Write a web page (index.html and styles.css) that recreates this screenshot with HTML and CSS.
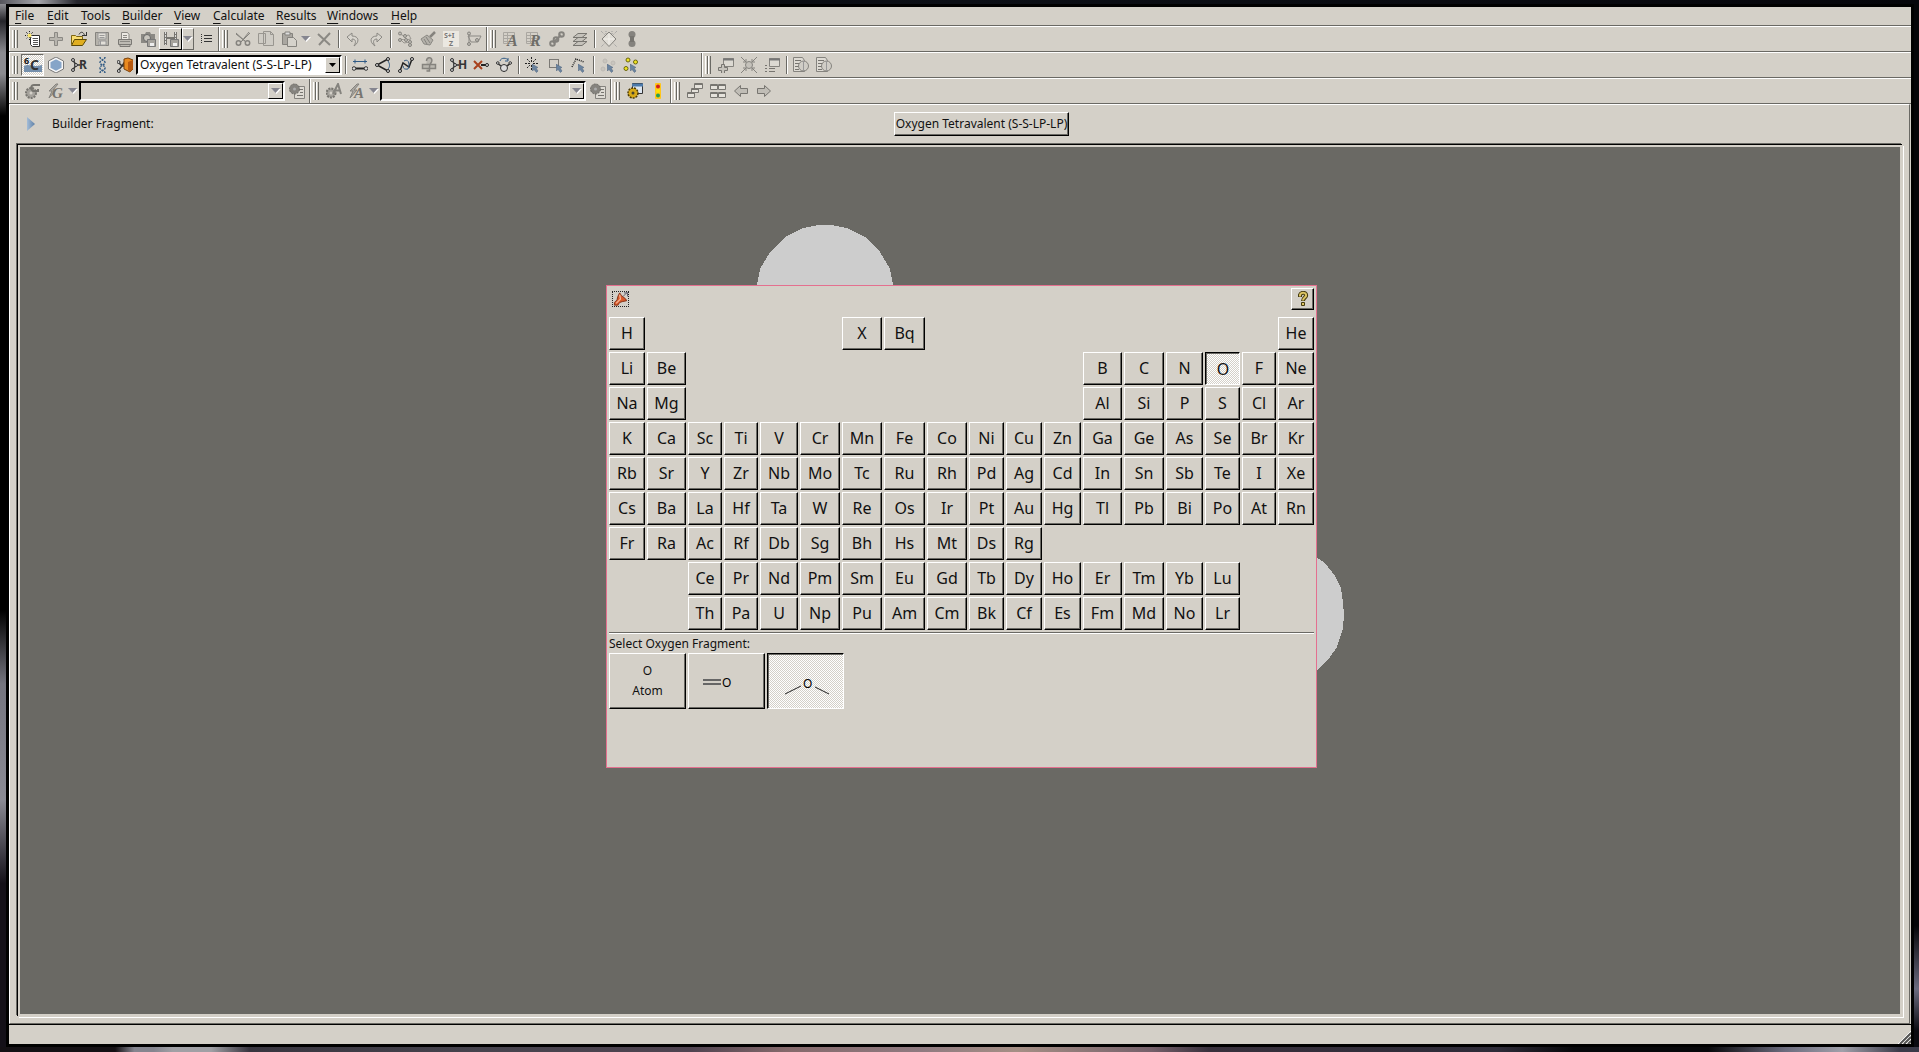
FILE: index.html
```
<!DOCTYPE html>
<html lang="en">
<head>
<meta charset="utf-8">
<title>Builder</title>
<link rel="stylesheet" href="styles.css">
</head>
<body>
<svg class="sprite" aria-hidden="true">
  <symbol id="i-new" viewBox="0 0 16 16"><path d="M5.500 4.500h9v11h-7l-2-2z" fill="#fff" stroke="#333"/><path d="M8 7.500h5M8 9.500h5M8 11.500h5M8 13.500h5" stroke="#555"/><path d="M1 1l7 7M8 1L1 8M4.500 0v9M0 4.500h9" stroke="#222" stroke-dasharray="1 1"/><circle cx="4.500" cy="4.500" r="2" fill="#fbe870"/></symbol>
  <symbol id="i-plus" viewBox="0 0 16 16"><path d="M6.500 1.500h3v5h5v3h-5v5h-3v-5h-5v-3h5z" fill="#b8b5ae" stroke="#8b8984"/></symbol>
  <symbol id="i-open" viewBox="0 0 16 16"><path d="M.500 13.500v-9h4l1 1h6v3" fill="#f8dc70" stroke="#7c6410"/><path d="M.500 14.500l3-6h12l-4 6z" fill="#e0ae20" stroke="#5c4a08"/><path d="M8 3.500c2-4 5-2 5.500 1M11 4.500h4M15.500 1v4" fill="none" stroke="#333"/></symbol>
  <symbol id="i-save" viewBox="0 0 16 16"><path d="M1.500 1.500h13v13h-13z" fill="#b5b2ab" stroke="#85837e"/><path d="M4 2h8v6H4zM5 10h7v4H5z" fill="#e2dfd8" stroke="#999"/><path d="M5.500 4.500h5M5.500 6.500h5M6.500 10v4" stroke="#999"/></symbol>
  <symbol id="i-print" viewBox="0 0 16 16"><path d="M4.500 8V1.500h6l1.500 2V8" fill="#ece9e3" stroke="#8b8984"/><path d="M1.500 8.500h13v5h-13zM3 13.500h10v2H3z" fill="#bdbab3" stroke="#7b7975"/><path d="M6 4.500h4M6 6.500h4M3 10.500h10" stroke="#8b8984"/></symbol>
  <symbol id="i-camera" viewBox="0 0 16 16"><path d="M1 3h4l1-2h4l1 2h4v9H1z" fill="#8b8984"/><circle cx="7" cy="7" r="3.500" fill="#c8c5be" stroke="#666"/><path d="M7.500 8.500h8v7h-8z" fill="#a5a29c" stroke="#777"/><path d="M10 12h4v3h-4z" fill="#eee"/></symbol>
  <symbol id="i-movie" viewBox="0 0 16 16"><path d="M1 1h3v13H1zM11 1h3v9h-3zM4 6h7v2H4z" fill="#777570"/><path d="M2.500 1v13M12.500 1v9" stroke="#ddd" stroke-dasharray="2 1"/><path d="M7.500 8.500h8v7h-8z" fill="#a5a29c" stroke="#777"/><path d="M10 12h4v3h-4z" fill="#eee"/></symbol>
  <symbol id="i-list" viewBox="0 0 16 16"><path d="M6 4.500h8M6 7.500h8M6 10.500h8" stroke="#333"/><path d="M3 3.500h2M3 5.500h2M3 7.500h2M3 9.500h2M3 11.500h2" stroke="#333" stroke-dasharray="1 1"/></symbol>
  <symbol id="i-cut" viewBox="0 0 16 16"><path d="M1 2l10 9M1 3l10 8M14 1L6 11M15 2L5 12" stroke="#85837e"/><circle cx="3.500" cy="12" r="2.200" fill="none" stroke="#85837e" stroke-width="1.500"/><circle cx="12.500" cy="12" r="2.200" fill="none" stroke="#85837e" stroke-width="1.500"/></symbol>
  <symbol id="i-copy" viewBox="0 0 16 16"><path d="M.500 2.500h7v10h-7zM5.500.500h7l3 3v11h-10z" fill="#cfccc5" stroke="#999690"/><path d="M12.500.500v3h3" fill="none" stroke="#999690"/></symbol>
  <symbol id="i-paste" viewBox="0 0 16 16"><path d="M1.500 2.500h10v11h-10z" fill="#aaa7a1" stroke="#85837e"/><path d="M4 1h5v3H4z" fill="#ddd" stroke="#85837e"/><path d="M6.500 6.500h6l3 3v6h-9z" fill="#d5d2cb" stroke="#85837e"/></symbol>
  <symbol id="i-x" viewBox="0 0 16 16"><path d="M2 3l12 11M14 2L3 14" stroke="#8b8984" stroke-width="2"/></symbol>
  <symbol id="i-undo" viewBox="0 0 16 16"><path d="M2 6l5-4v3c7 0 8 6 2 10 3-5 1-7-2-7v3z" fill="#d8d5ce" stroke="#8b8984"/></symbol>
  <symbol id="i-redo" viewBox="0 0 16 16"><path d="M14 6L9 2v3c-7 0-8 6-2 10-3-5-1-7 2-7v3z" fill="#d8d5ce" stroke="#8b8984"/></symbol>
  <symbol id="i-nodes" viewBox="0 0 16 16"><path d="M3 3l4 2 5-1 2 4-6 1-5-1 4 4 6-1 1 3" fill="none" stroke="#999690"/><g fill="#c0bdb6" stroke="#85837e"><circle cx="3" cy="2.500" r="1.500"/><circle cx="8" cy="5" r="1.500"/><circle cx="3" cy="9" r="1.500"/><circle cx="9" cy="9" r="1.500"/><circle cx="13" cy="11" r="1.500"/><circle cx="13" cy="14" r="1.500"/></g></symbol>
  <symbol id="i-brush" viewBox="0 0 16 16"><path d="M15 1l-5 5" stroke="#85837e" stroke-width="2.500"/><path d="M7 4l6 5-3 5-6-1-3-5z" fill="#b5b2ab" stroke="#8b8984"/><path d="M4 8l3 5M6 6l4 6" stroke="#85837e"/></symbol>
  <symbol id="i-build" viewBox="0 0 16 16"><path d="M2 5h13l-3 6H5zM3 2v12" fill="none" stroke="#8b8984"/><g fill="#c0bdb6" stroke="#85837e"><circle cx="3" cy="2.500" r="1.500"/><circle cx="3" cy="13" r="1.500"/><circle cx="11" cy="9" r="1.500"/></g></symbol>
  <symbol id="i-sheet" viewBox="0 0 16 16"><path d="M.500 1.500h11v11H.500zM1 4.500h10M1 7.500h10M1 10.500h10M4.500 2v10" fill="none" stroke="#aaa7a1"/></symbol>
  <symbol id="i-link" viewBox="0 0 16 16"><g fill="none" stroke="#85837e" stroke-width="2"><circle cx="3.500" cy="12.500" r="2.300"/><circle cx="7" cy="8.500" r="2.300"/><circle cx="12.500" cy="3.500" r="2.300"/><path d="M4 12l8-8"/></g></symbol>
  <symbol id="i-layers" viewBox="0 0 16 16"><g fill="#c5c2bb" stroke="#777570"><path d="M1 14.500l5-4h9l-5 4z"/><path d="M1 10.500l5-4h9l-5 4z"/><path d="M1 6.500l5-4h9l-5 4z"/></g></symbol>
  <symbol id="i-diamond" viewBox="0 0 16 16"><path d="M0 0l16 16M16 0L0 16M5 0v3M11 0v3" stroke="#999" stroke-dasharray="1 1"/><path d="M8 1l7 7-7 7.500L1 8z" fill="#e0ddd6" stroke="#85837e"/><path d="M8 3v10M3 8h10" stroke="#f3f1ec"/></symbol>
  <symbol id="i-orbital" viewBox="0 0 16 16"><circle cx="8" cy="3.500" r="3.500" fill="#85837e"/><circle cx="8" cy="12.500" r="3.500" fill="#85837e"/><path d="M6 5h4v6H6z" fill="#777570"/></symbol>
  <symbol id="i-ring" viewBox="0 0 16 16"><path d="M8 1l6.500 3.500v7L8 15l-6.500-3.500v-7z" fill="#86a5c8" stroke="#f6f6f6" stroke-width="2"/><path d="M8 0l7.500 4v8L8 16 .500 12V4z" fill="none" stroke="#777"/></symbol>
  <symbol id="i-valence" viewBox="0 0 16 16"><path d="M2 3l3 5-3 5M5 8h4" fill="none" stroke="#333" stroke-width="1.500"/><g fill="#ccc" stroke="#333"><circle cx="2" cy="3" r="1.500"/><circle cx="2" cy="13" r="1.500"/><circle cx="5" cy="8" r="1.500"/></g></symbol>
  <symbol id="i-dna" viewBox="0 0 16 16"><path d="M6 0c0 3 5 3 5 5.500S6 8 6 11s5 2 5 5M11 0c0 3-5 3-5 5.500S11 8 11 11s-5 2-5 5" fill="none" stroke="#315b85" stroke-width="1.500" stroke-dasharray="2 1"/></symbol>
  <symbol id="i-frag" viewBox="0 0 16 16"><path d="M1 5l4 4-4 5M5 9l4-6M5 9h5" fill="none" stroke="#333" stroke-width="1.500"/><path d="M7 2l4-1 5 2v9l-3 3-6-3z" fill="#e98a20" stroke="#794008"/><path d="M11 5l5-2v9l-3 3-2-2z" fill="#b85a10"/><circle cx="1.500" cy="5" r="1.500" fill="#ccc" stroke="#333"/><circle cx="1.800" cy="14" r="1.500" fill="#ccc" stroke="#333"/></symbol>
  <symbol id="i-bond" viewBox="0 0 16 16"><path d="M1 4.500h14M3 2.500v4M13 2.500v4" stroke="#315b85"/><path d="M2 11.500h12" stroke="#222" stroke-width="2"/><circle cx="2" cy="11.500" r="1.800" fill="#ddd" stroke="#333"/><circle cx="14" cy="11.500" r="1.800" fill="#ddd" stroke="#333"/></symbol>
  <symbol id="i-angle" viewBox="0 0 16 16"><path d="M13 2L2 8l11 6" fill="none" stroke="#222" stroke-width="1.500"/><path d="M13 4c2 3 2 6 0 8" fill="none" stroke="#315b85"/><circle cx="2" cy="8" r="1.500" fill="#ddd" stroke="#222"/><circle cx="13" cy="2" r="1.500" fill="#ddd" stroke="#222"/><circle cx="13" cy="14" r="1.500" fill="#ddd" stroke="#222"/></symbol>
  <symbol id="i-torsion" viewBox="0 0 16 16"><path d="M2 14l3-8 6 4 3-8" fill="none" stroke="#222" stroke-width="1.500"/><path d="M6 4c5-3 6 4 4 8-4 1-6-2-4-3" fill="none" stroke="#315b85"/><circle cx="2" cy="14" r="1.500" fill="#ddd" stroke="#222"/><circle cx="14" cy="2" r="1.500" fill="#ddd" stroke="#222"/></symbol>
  <symbol id="i-query" viewBox="0 0 16 16"><path d="M1.500 7.500h13v4h-13zM5.500 4c0-5 7-4 5 1-1 2-2 2-2 5v4h-3" fill="#bbb8b1" stroke="#85837e" stroke-width="1.500"/></symbol>
  <symbol id="i-delatom" viewBox="0 0 16 16"><path d="M8 8h6" stroke="#222" stroke-width="2"/><path d="M1 4l8 8M9 4l-8 8" stroke="#a8401c" stroke-width="2"/><circle cx="14" cy="8" r="1.500" fill="#ddd" stroke="#222"/></symbol>
  <symbol id="i-invert" viewBox="0 0 16 16"><path d="M1 6l7 5 7-5M8 11v4" stroke="#333" fill="none" stroke-width="1.500"/><path d="M4 4c1-4 7-3 8-1M12 1v3H9" fill="none" stroke="#315b85"/><circle cx="8" cy="11" r="3.500" fill="#ddd" stroke="#333"/><circle cx="1.800" cy="6" r="1.300" fill="#ddd" stroke="#333"/><circle cx="14.200" cy="6" r="1.300" fill="#ddd" stroke="#333"/></symbol>
  <symbol id="i-ptr" viewBox="0 0 8 9"><path d="M0 0l6 3.500-2 .500 2 3-1.500 1.500-2.500-3L.500 7z" fill="#6b84a0" stroke="#4d637c" stroke-width=".500"/></symbol>
  <symbol id="i-pick" viewBox="0 0 16 16"><path d="M6.500 0v5M6.500 8v5M0 6.500h5M8 6.500h5M2 2l3 3M11 2l-3 3M2 11l3-3" stroke="#222" stroke-dasharray="2 1"/><use href="#i-ptr" x="7" y="7" width="8" height="9"/></symbol>
  <symbol id="i-box" viewBox="0 0 16 16"><path d="M1.500 2.500h9v8h-9z" fill="none" stroke="#222" stroke-dasharray="1 1"/><use href="#i-ptr" x="8" y="7" width="8" height="9"/></symbol>
  <symbol id="i-lasso" viewBox="0 0 16 16"><path d="M1 10l4-8 8 3" fill="none" stroke="#222" stroke-width="1.500" stroke-dasharray="1 1"/><use href="#i-ptr" x="7" y="7" width="8" height="9"/></symbol>
  <symbol id="i-faint" viewBox="0 0 16 16"><g fill="#c8c5be" stroke="#bdbab3"><circle cx="5" cy="4" r="2"/><circle cx="13" cy="6" r="2"/><circle cx="3" cy="12" r="2"/></g><use href="#i-ptr" x="7" y="7" width="8" height="9"/></symbol>
  <symbol id="i-yellow" viewBox="0 0 16 16"><g fill="#eee420" stroke="#6b6510"><circle cx="5" cy="3" r="2"/><circle cx="12.500" cy="5" r="2"/><circle cx="3" cy="11.500" r="2"/></g><use href="#i-ptr" x="7" y="7" width="8" height="9"/></symbol>
  <symbol id="i-addwin" viewBox="0 0 16 16"><path d="M5.500 1.500h10v8h-10z" fill="#dcd9d2" stroke="#85837e"/><path d="M5 2.500h11" stroke="#777" stroke-width="2"/><path d="M3.500 7.500h3v3h3v3h-3v3h-3v-3h-3v-3h3z" fill="#c5c2bb" stroke="#777570"/></symbol>
  <symbol id="i-center" viewBox="0 0 16 16"><path d="M0 0l5 5M16 0l-5 5M0 16l5-5M16 16l-5-5M2 5h3V2M14 5h-3V2M2 11h3v3M14 11h-3v3" fill="none" stroke="#85837e"/><circle cx="8" cy="8" r="3.500" fill="#c5c2bb" stroke="#85837e"/></symbol>
  <symbol id="i-listwin" viewBox="0 0 16 16"><path d="M5.500 1.500h10v8h-10z" fill="#dcd9d2" stroke="#85837e"/><path d="M5 2.500h11" stroke="#777" stroke-width="2"/><path d="M1 8.500h2M1 11.500h2M1 14.500h2M5 11.500h6M5 14.500h6" stroke="#777570"/></symbol>
  <symbol id="i-doc" viewBox="0 0 16 16"><path d="M.500.500h9l2 3v11H.500z" fill="#dedbd4" stroke="#85837e"/><path d="M2 3.500h6M2 6.500h5M2 9.500h5M2 12.500h4" stroke="#777570"/><circle cx="10.500" cy="9" r="5" fill="#d0cdc6" stroke="#85837e"/><path d="M10.500 4v10" stroke="#999"/></symbol>
  <symbol id="i-gearg" viewBox="0 0 16 16"><circle cx="6" cy="10" r="5" fill="#a5a29c" stroke="#777570" stroke-width="2" stroke-dasharray="2 1"/><circle cx="6" cy="10" r="1.500" fill="#d4d0c8"/><path d="M15 2H9c-3 0-4 4-1 6h5V6" fill="none" stroke="#777570" stroke-width="2"/></symbol>
  <symbol id="i-gear2" viewBox="0 0 16 16"><circle cx="5" cy="10" r="4.500" fill="#a5a29c" stroke="#777570" stroke-width="2" stroke-dasharray="2 1"/><circle cx="5" cy="10" r="1.500" fill="#d4d0c8"/><path d="M7 11l5-10 3 10M9 7.500h5" fill="none" stroke="#85837e" stroke-width="2"/></symbol>
  <symbol id="i-bolt" viewBox="0 0 16 16"><path d="M8 1L1 8h3l-3 7 7-8H5l5-6z" fill="#aaa7a1" stroke="#85837e"/></symbol>
  <symbol id="i-geardoc" viewBox="0 0 16 16"><path d="M5.500 3.500h10v12h-10z" fill="#dedbd4" stroke="#85837e"/><path d="M11 6.500h3M11 9.500h3M8 12.500h6" stroke="#777570"/><circle cx="5.500" cy="6" r="5" fill="#85837e" stroke="#6b6964" stroke-dasharray="2 1"/><circle cx="5.500" cy="6" r="1.500" fill="#aaa"/></symbol>
  <symbol id="i-gearwin" viewBox="0 0 16 16"><path d="M5.500.500h10v10h-10z" fill="#dce5f0" stroke="#333"/><path d="M5 2h11" stroke="#4c7aab" stroke-width="3"/><circle cx="6" cy="10" r="5" fill="#d8aa18" stroke="#4c3a04" stroke-width="1.500" stroke-dasharray="2 1"/><circle cx="6" cy="10" r="1.500" fill="#443"/></symbol>
  <symbol id="i-light" viewBox="0 0 16 16"><rect x="5" y="0" width="6" height="16" rx="1" fill="#ffc61a"/><circle cx="8" cy="3.500" r="2" fill="#d02020"/><circle cx="8" cy="8" r="2" fill="#ffe600"/><circle cx="8" cy="12.500" r="2" fill="#25a050"/></symbol>
  <symbol id="i-cascade" viewBox="0 0 16 16"><g fill="#e5e2db" stroke="#777570"><path d="M7.500.500h8v5h-8z"/><path d="M4.500 5.500h7v4h-7z"/><path d="M.500 9.500h7v5h-7z"/></g><path d="M7 1.500h9M4 6.500h8M0 10.500h8" stroke="#777570"/></symbol>
  <symbol id="i-tile" viewBox="0 0 16 16"><g fill="#e5e2db" stroke="#777570"><path d="M.500 1.500h7v5h-7zM8.500 1.500h7v5h-7zM.500 9.500h7v5h-7zM8.500 9.500h7v5h-7z"/></g><path d="M0 2.500h16M0 10.500h16" stroke="#777570"/></symbol>
  <symbol id="i-left" viewBox="0 0 16 16"><path d="M1.500 8l6-5.500v3h7v5h-7v3z" fill="#c0bdb6" stroke="#777570"/></symbol>
  <symbol id="i-right" viewBox="0 0 16 16"><path d="M14.500 8l-6-5.500v3h-7v5h7v3z" fill="#c0bdb6" stroke="#777570"/></symbol>
  <symbol id="i-tri" viewBox="0 0 10 6"><path d="M1 1h9L5.500 6z" fill="#fff"/><path d="M0 0h9L4.500 5z" fill="#85858f"/></symbol>
  <symbol id="i-trib" viewBox="0 0 10 6"><path d="M1 1h7L4.500 5z" fill="#000"/></symbol>
</svg>

<div class="window">
  <nav class="menubar" aria-label="Main menu">
    <a href="#"><u>F</u>ile</a><a href="#"><u>E</u>dit</a><a href="#"><u>T</u>ools</a><a href="#"><u>B</u>uilder</a><a href="#"><u>V</u>iew</a><a href="#"><u>C</u>alculate</a><a href="#"><u>R</u>esults</a><a href="#"><u>W</u>indows</a><a href="#"><u>H</u>elp</a>
  </nav>

  <div class="toolrow">
    <div class="group"><i class="handle"></i>
      <button class="tool" aria-label="New"><svg><use href="#i-new"/></svg></button>
      <button class="tool" aria-label="Add"><svg><use href="#i-plus"/></svg></button>
      <button class="tool" aria-label="Open"><svg><use href="#i-open"/></svg></button>
      <button class="tool" aria-label="Save"><svg><use href="#i-save"/></svg></button>
      <button class="tool" aria-label="Print"><svg><use href="#i-print"/></svg></button>
      <button class="tool" aria-label="Save image"><svg><use href="#i-camera"/></svg></button>
      <button class="tool raised" aria-label="Save movie"><svg><use href="#i-movie"/></svg></button>
      <button class="drop thin" aria-label="Movie options"><svg><use href="#i-tri"/></svg></button>
      <button class="tool" aria-label="List"><svg><use href="#i-list"/></svg></button>
    </div>
    <div class="group"><i class="handle"></i>
      <button class="tool" aria-label="Cut"><svg><use href="#i-cut"/></svg></button>
      <button class="tool" aria-label="Copy"><svg><use href="#i-copy"/></svg></button>
      <button class="tool" aria-label="Paste"><svg><use href="#i-paste"/></svg></button>
      <button class="drop" aria-label="Paste options"><svg><use href="#i-tri"/></svg></button>
      <button class="tool" aria-label="Delete"><svg><use href="#i-x"/></svg></button>
      <i class="sep"></i>
      <button class="tool" aria-label="Undo"><svg><use href="#i-undo"/></svg></button>
      <button class="tool" aria-label="Redo"><svg><use href="#i-redo"/></svg></button>
      <i class="sep"></i>
      <button class="tool" aria-label="Rebond"><svg><use href="#i-nodes"/></svg></button>
      <button class="tool" aria-label="Clean"><svg><use href="#i-brush"/></svg></button>
      <button class="tool" aria-label="Symmetrize"><svg viewBox="0 0 16 16"><path d="M0 0h16v16H0z" fill="#ebe8e1"/><text x="1" y="7" font-size="7" fill="#777" font-weight="700">S+I</text><text x="6" y="15" font-size="7" fill="#777" font-weight="700">Z</text></svg></button>
      <button class="tool" aria-label="Point group"><svg><use href="#i-build"/></svg></button>
    </div>
    <div class="group open"><i class="handle"></i>
      <button class="tool" aria-label="Atom list"><svg viewBox="0 0 16 16"><use href="#i-sheet"/><text class="serif" x="4" y="15" font-size="16" fill="#6f6d68">A</text></svg></button>
      <button class="tool" aria-label="Redundant coordinates"><svg viewBox="0 0 16 16"><use href="#i-sheet"/><text class="serif" x="4" y="15" font-size="16" fill="#6f6d68">R</text></svg></button>
      <button class="tool" aria-label="Connection"><svg><use href="#i-link"/></svg></button>
      <button class="tool" aria-label="Layers"><svg><use href="#i-layers"/></svg></button>
      <i class="sep"></i>
      <button class="tool" aria-label="Cell"><svg><use href="#i-diamond"/></svg></button>
      <button class="tool" aria-label="Orbitals"><svg><use href="#i-orbital"/></svg></button>
    </div>
  </div>

  <div class="toolrow">
    <div class="group wide"><i class="handle"></i>
      <button class="tool pressed" aria-label="Element fragment"><svg viewBox="0 0 18 16"><path d="M0 9c6-3 7 2 18-1v7H0z" fill="#7590ad"/><text x="0" y="7" font-size="9" font-weight="700" fill="#111">6</text><text x="6" y="13" font-size="14" font-weight="700" fill="#333">C</text></svg></button>
      <button class="tool" aria-label="Ring fragment"><svg><use href="#i-ring"/></svg></button>
      <button class="tool" aria-label="R-group fragment"><svg viewBox="0 0 16 16"><use href="#i-valence"/><text x="8" y="12" font-size="12" font-weight="700" fill="#333">R</text></svg></button>
      <button class="tool" aria-label="Biological fragment"><svg><use href="#i-dna"/></svg></button>
      <button class="tool" aria-label="Custom fragment"><svg><use href="#i-frag"/></svg></button>
      <span class="combo active"><select aria-label="Current fragment"><option>Oxygen Tetravalent (S-S-LP-LP)</option></select><i><svg><use href="#i-trib"/></svg></i></span>
      <i class="sep"></i>
      <button class="tool" aria-label="Modify bond"><svg><use href="#i-bond"/></svg></button>
      <button class="tool" aria-label="Modify angle"><svg><use href="#i-angle"/></svg></button>
      <button class="tool" aria-label="Modify dihedral"><svg><use href="#i-torsion"/></svg></button>
      <button class="tool" aria-label="Inquire"><svg><use href="#i-query"/></svg></button>
      <i class="sep"></i>
      <button class="tool" aria-label="Add valence"><svg viewBox="0 0 16 16"><use href="#i-valence"/><text x="8" y="12" font-size="12" font-weight="700" fill="#333">H</text></svg></button>
      <button class="tool" aria-label="Delete atom"><svg><use href="#i-delatom"/></svg></button>
      <button class="tool" aria-label="Invert"><svg><use href="#i-invert"/></svg></button>
      <i class="sep"></i>
      <button class="tool" aria-label="Select atom"><svg><use href="#i-pick"/></svg></button>
      <button class="tool" aria-label="Select box"><svg><use href="#i-box"/></svg></button>
      <button class="tool" aria-label="Select lasso"><svg><use href="#i-lasso"/></svg></button>
      <i class="sep"></i>
      <button class="tool" aria-label="Deselect all"><svg><use href="#i-faint"/></svg></button>
      <button class="tool" aria-label="Select all"><svg><use href="#i-yellow"/></svg></button>
    </div>
    <div class="group open"><i class="handle"></i>
      <button class="tool" aria-label="Add view"><svg><use href="#i-addwin"/></svg></button>
      <button class="tool" aria-label="Centre view"><svg><use href="#i-center"/></svg></button>
      <button class="tool" aria-label="View list"><svg><use href="#i-listwin"/></svg></button>
      <i class="sep"></i>
      <button class="tool" aria-label="View file"><svg><use href="#i-doc"/></svg></button>
      <button class="tool" aria-label="Stream file"><svg><use href="#i-doc"/></svg></button>
    </div>
  </div>

  <div class="toolrow">
    <div class="group"><i class="handle"></i>
      <button class="tool" aria-label="Calculation setup"><svg><use href="#i-gearg"/></svg></button>
      <button class="tool" aria-label="Quick launch"><svg viewBox="0 0 16 16"><use href="#i-bolt"/><text class="serif" x="4" y="15" font-size="15" fill="#777570">G</text></svg></button>
      <button class="drop" aria-label="Launch options"><svg><use href="#i-tri"/></svg></button>
      <span class="combo"><select aria-label="Calculation scheme"><option></option></select><i><svg><use href="#i-tri"/></svg></i></span>
      <button class="tool" aria-label="Edit schemes"><svg><use href="#i-geardoc"/></svg></button>
    </div>
    <div class="group"><i class="handle"></i>
      <button class="tool" aria-label="Second setup"><svg><use href="#i-gear2"/></svg></button>
      <button class="tool" aria-label="Second launch"><svg viewBox="0 0 16 16"><use href="#i-bolt"/><text class="serif" x="5" y="15" font-size="15" fill="#777570">A</text></svg></button>
      <button class="drop" aria-label="Second launch options"><svg><use href="#i-tri"/></svg></button>
      <span class="combo"><select aria-label="Second scheme"><option></option></select><i><svg><use href="#i-tri"/></svg></i></span>
      <button class="tool" aria-label="Edit second schemes"><svg><use href="#i-geardoc"/></svg></button>
    </div>
    <div class="group"><i class="handle"></i>
      <button class="tool" aria-label="Job manager"><svg><use href="#i-gearwin"/></svg></button>
      <button class="tool" aria-label="Job status"><svg><use href="#i-light"/></svg></button>
    </div>
    <div class="group open"><i class="handle"></i>
      <button class="tool" aria-label="Cascade"><svg><use href="#i-cascade"/></svg></button>
      <button class="tool" aria-label="Tile"><svg><use href="#i-tile"/></svg></button>
      <button class="tool" aria-label="Previous"><svg><use href="#i-left"/></svg></button>
      <button class="tool" aria-label="Next"><svg><use href="#i-right"/></svg></button>
    </div>
  </div>

  <main class="workspace">
    <header class="current">
      <svg class="expander" viewBox="0 0 8 14"><defs><linearGradient id="blue"><stop stop-color="#a4bdd8"/><stop offset="1" stop-color="#5e7fa5"/></linearGradient></defs><path d="M0 0l8 7-8 7z" fill="url(#blue)"/></svg>
      <span class="caption" id="cap">Builder Fragment:</span>
      <div class="slot"><button class="bevel name" aria-describedby="cap">Oxygen Tetravalent (S-S-LP-LP)</button></div>
    </header>
    <div class="viewport">
      <svg class="scene" viewBox="0 0 1880 867" preserveAspectRatio="xMidYMin meet" shape-rendering="crispEdges" fill="#cdcdcd">
        <polygon points="799,78 811,78 827,81 845,90 860,105 870,122 873,138 873,156 737,156 737,138 740,122 750,105 765,90 783,81"/>
        <polygon points="1290,406 1305,416 1315,429 1321,441 1323,456 1324,467 1323,482 1317,500 1308,513 1297,523 1280,530 1240,530 1240,406"/>
      </svg>
      <section class="palette" role="dialog" aria-label="Element Fragments">
        <div class="palette-top">
          <button class="pin" aria-label="Keep open"><svg viewBox="0 0 16 16"><path d="M7 1l2 3 5 4 1 2-5 1-3 1-2 3-4 0 0-3 3-3 1-4z" fill="#d8592a" stroke="#7c2a10"/><path d="M7 3l1 5-5 5" fill="none" stroke="#f7b392" stroke-width="1.500"/><path d="M11 5l5-5M12 1h4v4" fill="none" stroke="#556"/></svg></button>
          <button class="bevel help" aria-label="Help"><svg viewBox="0 0 16 16"><path d="M5 6V4c1-3 7-3 6 1-1 2-3 2-3 5" fill="none" stroke="#463c10" stroke-width="4"/><path d="M5 5.500V4c1-3 7-3 6 1-1 2-3 2-3 4.500" fill="none" stroke="#dcc463" stroke-width="2"/><path d="M6.500 11.500h3v3h-3z" fill="#dcc463" stroke="#463c10"/></svg></button>
        </div>
        <div class="elements">
          <button>H</button><i class="s5"></i><button>X</button><button>Bq</button><i class="s9"></i><button>He</button>
          <button>Li</button><button>Be</button><i class="s10"></i><button>B</button><button>C</button><button>N</button><button class="on">O</button><button>F</button><button>Ne</button>
          <button>Na</button><button>Mg</button><i class="s10"></i><button>Al</button><button>Si</button><button>P</button><button>S</button><button>Cl</button><button>Ar</button>
          <button>K</button><button>Ca</button><button>Sc</button><button>Ti</button><button>V</button><button>Cr</button><button>Mn</button><button>Fe</button><button>Co</button><button>Ni</button><button>Cu</button><button>Zn</button><button>Ga</button><button>Ge</button><button>As</button><button>Se</button><button>Br</button><button>Kr</button>
          <button>Rb</button><button>Sr</button><button>Y</button><button>Zr</button><button>Nb</button><button>Mo</button><button>Tc</button><button>Ru</button><button>Rh</button><button>Pd</button><button>Ag</button><button>Cd</button><button>In</button><button>Sn</button><button>Sb</button><button>Te</button><button>I</button><button>Xe</button>
          <button>Cs</button><button>Ba</button><button>La</button><button>Hf</button><button>Ta</button><button>W</button><button>Re</button><button>Os</button><button>Ir</button><button>Pt</button><button>Au</button><button>Hg</button><button>Tl</button><button>Pb</button><button>Bi</button><button>Po</button><button>At</button><button>Rn</button>
          <button>Fr</button><button>Ra</button><button>Ac</button><button>Rf</button><button>Db</button><button>Sg</button><button>Bh</button><button>Hs</button><button>Mt</button><button>Ds</button><button>Rg</button><i class="s7"></i>
          <i class="s2"></i><button>Ce</button><button>Pr</button><button>Nd</button><button>Pm</button><button>Sm</button><button>Eu</button><button>Gd</button><button>Tb</button><button>Dy</button><button>Ho</button><button>Er</button><button>Tm</button><button>Yb</button><button>Lu</button><i class="s2"></i>
          <i class="s2"></i><button>Th</button><button>Pa</button><button>U</button><button>Np</button><button>Pu</button><button>Am</button><button>Cm</button><button>Bk</button><button>Cf</button><button>Es</button><button>Fm</button><button>Md</button><button>No</button><button>Lr</button><i class="s2"></i>
        </div>
        <h2>Select Oxygen Fragment:</h2>
        <div class="fragments">
          <button><span>O</span><span>Atom</span></button>
          <button aria-label="Double bond oxygen"><svg viewBox="0 0 72 52"><path d="M12 25h18M12 29h18" stroke="#666" stroke-width="2"/><text x="31" y="32">O</text></svg></button>
          <button class="on" aria-label="Tetravalent oxygen"><svg viewBox="0 0 72 52"><path d="M15 39l16-8M45 32l14 7" stroke="#222"/><text x="33" y="33">O</text></svg></button>
        </div>
      </section>
    </div>
  </main>
  <footer class="status"><svg class="grip" viewBox="0 0 13 13"><path d="M0 13L13 0M4 13l9-9M8 13l5-5" stroke="#fff"/><path d="M2 13L13 2M6 13l7-7M10 13l3-3" stroke="#555" stroke-width="2"/></svg></footer>
</div>
</body>
</html>
```
FILE: styles.css
```
:root {
  --face: #d4d0c8;
  --shade: #6a6964;
  --light: #fff;
}
* { box-sizing: border-box; }
body {
  margin: 0;
  height: 100vh;
  display: flex;
  padding: 4px 5px 5px 6px;
  font: 12px/16px "Noto Sans", sans-serif;
  color: #111;
  background:
    linear-gradient(90deg, #141014 6%, #85858f 7% 8%, #a0a0a5 9% 11%, #38353f 13%, #46434d 25%, #4f4350 36%, #85696b 41%, #8f7a80 48%, #a58f85 53%, #75606a 60%, #38303c 63%, #2e2b38 78%, #07070a 82% 89%, #6b6b7d 93%, #a0a0aa 96%, #3a3a48 99%) 0 100% / 100% 5px no-repeat,
    linear-gradient(90deg, #55555c, #a5a5aa 2%, #25252c 4%, #05050a 8%, #0c0f16 50%, #05050a) 0 0 / 100% 4px no-repeat,
    linear-gradient(#a5a5aa, #25252a 2%, #8b8b90 5% 7%, #000 11% 58%, #75757f 65%, #8b8b95 76%, #141018 84%) 0 0 / 6px 100% no-repeat,
    linear-gradient(#050508 88%, #6b6b80 94%, #0a0a10 98%) 100% 0 / 5px 100% no-repeat,
    #08080b;
}
button, select { font: inherit; color: inherit; margin: 0; padding: 0; border: 0; border-radius: 0; background: none; }
.sprite { display: none; }
.serif { font-family: "Liberation Serif", serif; font-weight: 700; font-style: italic; }

.window { flex: 1; display: flex; flex-direction: column; border: 3px solid #000; background: var(--face); }

.menubar {
  display: grid;
  grid-template-columns: 32px 34px 41px 52px 39px 63px 51px 64px auto;
  height: 19px;
  padding-left: 6px;
  border-bottom: 1px solid var(--shade);
}
.menubar a { color: inherit; text-decoration: none; line-height: 18px; }
.menubar u { text-underline-offset: 3px; }

.toolrow { display: flex; height: 26px; border-top: 1px solid var(--light); border-bottom: 1px solid var(--shade); }
.group { display: flex; align-items: center; border-right: 1px solid var(--shade); padding: 0 1px 0 3px; box-shadow: inset 1px 0 var(--light); }
.group.open { border-right: 0; }
.group.wide { width: 693px; }
.handle { width: 6px; height: 18px; margin-right: 3px; background: linear-gradient(90deg, #fff 0 1px, #d4d0c8 1px 2px, #6a6964 2px 3px, #fff 3px 4px, #d4d0c8 4px 5px, #6a6964 5px); }
.sep { width: 6px; height: 18px; background: linear-gradient(90deg, transparent 0 3px, #6a6964 3px 4px, #fff 4px 5px, transparent 5px); }
.tool { width: 23px; height: 22px; display: grid; place-items: center; }
.tool svg { width: 16px; height: 16px; overflow: visible; }
.drop { width: 12px; height: 22px; display: grid; place-items: center; }
.drop svg, .combo svg { width: 10px; height: 6px; }
.raised { border: 1px solid; border-color: #fff #000 #000 #fff; }
.thin { border: 1px solid; border-color: #fff #6a6964 #6a6964 #fff; }
.pressed { border: 1px solid; border-color: #6a6964 #fff #fff #6a6964; }
.pressed svg { width: 18px; }
.pressed, .on { background: repeating-conic-gradient(#fff 0 25%, #d4d0c8 0 50%) 0 0 / 2px 2px; }

.combo { display: grid; width: 206px; height: 20px; border: 2px solid; border-color: #000 #fff #fff #000; }
.combo > * { grid-area: 1 / 1; }
.combo select { appearance: none; width: 100%; height: 16px; padding-left: 2px; }
.combo i { justify-self: end; display: grid; place-items: center; width: 15px; height: 16px; pointer-events: none; background: var(--face); border: 1px solid; border-color: #fff #000 #000 #fff; }
.combo.active select { background: #fff; }

.workspace { flex: 1; display: flex; flex-direction: column; margin-right: 1px; padding: 0 5px 5px 6px; border: 1px solid; border-color: #fff #6a6964 #6a6964 #fff; }
.current { display: flex; align-items: center; height: 38px; padding-left: 11px; }
.expander { width: 8px; height: 14px; }
.caption { width: 114px; padding-left: 17px; white-space: nowrap; }
.slot { flex: 1; display: flex; justify-content: center; padding-right: 90px; }
.bevel, .elements button, .fragments button { border: 1px solid; border-color: #fff #000 #000 #fff; box-shadow: inset -1px -1px #6a6964; }
.name { height: 24px; min-width: 175px; padding: 0 1px; white-space: nowrap; }
.viewport {
  flex: 1;
  position: relative;
  margin: 2px 1px 1px 2px;
  overflow: hidden;
  background: #6a6964;
  border: solid var(--face);
  border-width: 2px 3px 3px 2px;
  box-shadow: -1px -1px #000, -2px -2px #6a6964, 1px 1px #fff;
}
.scene { position: absolute; inset: 0; width: 100%; height: 100%; }

.palette { position: absolute; top: 138px; left: 50%; margin-left: -354px; width: 711px; min-height: 483px; padding: 2px; border: 1px solid #e4708f; background: var(--face); }
.palette-top { display: flex; justify-content: space-between; align-items: flex-start; height: 29px; }
.pin { width: 17px; height: 16px; margin: 3px; border: 1px dotted #222; }
.pin svg { width: 15px; height: 14px; display: block; }
.help { width: 23px; height: 22px; display: grid; place-items: center; }
.help svg { width: 16px; height: 16px; }
.elements { display: grid; grid-template-columns: 36px 39px 34px 34px 38px 40px 40px 41px 40px 35px 36px 37px 39px 40px 37px 35px 34px 36px; grid-auto-rows: 33px; gap: 2px; font-size: 16px; }
.elements button { padding-bottom: 2px; }
.elements .on, .fragments .on { border-color: #000 #fff #fff #000; box-shadow: inset 1px 1px #6a6964; }
.elements .on { padding: 0 0 0 1px; }
.s2 { grid-column: span 2; }
.s5 { grid-column: span 5; }
.s7 { grid-column: span 7; }
.s9 { grid-column: span 9; }
.s10 { grid-column: span 10; }
h2 { margin: 2px 0 0; padding-top: 3px; height: 20px; font: inherit; border-top: 1px solid #6a6964; box-shadow: inset 0 1px #fff; }
.fragments { display: flex; gap: 2px; margin-top: 1px; }
.fragments button { width: 77px; height: 56px; display: flex; flex-direction: column; align-items: center; justify-content: center; gap: 4px; }
.fragments svg { width: 72px; height: 52px; }

.status { display: flex; justify-content: flex-end; align-items: flex-end; height: 20px; border-top: 1px solid #000; }
.grip { width: 13px; height: 13px; }
```
